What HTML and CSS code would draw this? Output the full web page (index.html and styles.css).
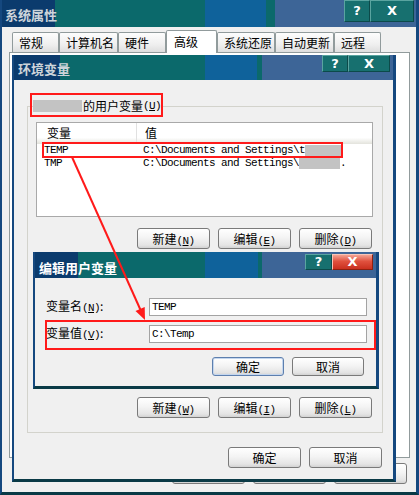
FILE: index.html
```html
<!DOCTYPE html>
<html lang="zh-CN">
<head>
<meta charset="utf-8">
<title>系统属性</title>
<link rel="stylesheet" href="styles.css">
</head>
<body>
<div class="win outer">
  <div class="titlebar outer-tb">
    <span class="title inactive">系统属性</span>
    <div class="caps"><span class="cap help">?</span><span class="cap close">X</span></div>
  </div>
  <div class="outer-body">
    <div class="tabs">
      <span class="tab t1">常规</span>
      <span class="tab t2">计算机名</span>
      <span class="tab t3">硬件</span>
      <span class="tab t4 sel">高级</span>
      <span class="tab t5">系统还原</span>
      <span class="tab t6">自动更新</span>
      <span class="tab t7">远程</span>
    </div>
    <div class="panel"></div>
    <div class="btnrow outer-btns">
      <span class="btn">确定</span><span class="btn">取消</span><span class="btn">应用<span class="acc">(<u>A</u>)</span></span>
    </div>
  </div>
</div>

<div class="win env">
  <div class="titlebar env-tb">
    <span class="title inactive">环境变量</span>
    <div class="caps"><span class="cap help">?</span><span class="cap close">X</span></div>
  </div>
  <div class="env-body">
    <fieldset class="group">
      <legend><span class="blot name"></span>的用户变量<span class="acc">(<u>U</u>)</span></legend>
      <div class="list">
        <div class="lh"><span class="c1">变量</span><span class="c2">值</span></div>
        <div class="lr"><span class="c1 mono">TEMP</span><span class="c2 mono">C:\Documents and Settings\t<span class="blot b1"></span></span></div>
        <div class="lr"><span class="c1 mono">TMP</span><span class="c2 mono">C:\Documents and Settings\<span class="blot b2"></span>.</span></div>
      </div>
      <div class="btnrow grp-btns">
        <span class="btn">新建<span class="acc">(<u>N</u>)</span></span>
        <span class="btn">编辑<span class="acc">(<u>E</u>)</span></span>
        <span class="btn">删除<span class="acc">(<u>D</u>)</span></span>
      </div>
      <div class="sys">
        <div class="list sys-list"></div>
      </div>
      <div class="btnrow grp-btns2">
        <span class="btn">新建<span class="acc">(<u>W</u>)</span></span>
        <span class="btn">编辑<span class="acc">(<u>I</u>)</span></span>
        <span class="btn">删除<span class="acc">(<u>L</u>)</span></span>
      </div>
    </fieldset>
    <div class="btnrow dlg-btns">
      <span class="btn">确定</span><span class="btn">取消</span>
    </div>
  </div>
</div>

<div class="win edit">
  <div class="titlebar edit-tb">
    <span class="title">编辑用户变量</span>
    <div class="caps"><span class="cap help">?</span><span class="cap close red">X</span></div>
  </div>
  <div class="edit-body">
    <div class="field"><label>变量名<span class="acc">(<u>N</u>)</span>:</label><span class="input mono">TEMP</span></div>
    <div class="field"><label>变量值<span class="acc">(<u>V</u>)</span>:</label><span class="input mono">C:\Temp</span></div>
    <div class="btnrow edit-btns">
      <span class="btn small default">确定</span><span class="btn small">取消</span>
    </div>
  </div>
</div>

<svg class="marks" width="419" height="495" viewBox="0 0 419 495">
  <g fill="none" stroke="#ff1a1a" stroke-width="2">
    <rect x="31" y="94" width="131" height="22"/>
    <rect x="43" y="143" width="299" height="14"/>
    <rect x="46" y="321" width="329" height="28"/>
    <line x1="72" y1="157" x2="141" y2="311"/>
  </g>
  <polygon points="145,320 135.5,311 144.7,307" fill="#ff1a1a"/>
</svg>
</body>
</html>
```

FILE: styles.css
```css
html, body {
  margin: 0;
}
body {
  width: 419px;
  height: 495px;
  position: relative;
  overflow: hidden;
  background: #f0f0f0;
  color: #000;
  font-family: "Noto Sans CJK SC", "Noto Sans", sans-serif;
  font-size: 12px;
  line-height: 14px;
}

.win {
  box-sizing: border-box;
  display: flex;
  flex-direction: column;
  background: #f0f0f0;
  border-style: solid;
  border-color: #15487f;
  border-width: 0 3px 3px 2px;
  border-bottom-color: #0a3a46;
}
.win.outer {
  width: 419px;
  height: 495px;
}
.win.env {
  position: absolute;
  left: 12px;
  top: 55px;
  width: 384px;
  height: 427px;
}
.win.edit {
  position: absolute;
  left: 33px;
  top: 252px;
  width: 346px;
  height: 137px;
}

/* title bars */
.titlebar {
  display: flex;
  align-items: flex-start;
  flex: none;
}
.outer-tb {
  height: 27px;
  background: linear-gradient(to right,
    #0b3b6d 0, #0b3b6d 53px,
    #0b696b 53px, #0b696b 203px,
    #0f629b 203px, #0f629b 264px,
    #0b696b 264px, #0b696b 273px,
    #3d6597 273px);
}
.env-tb {
  height: 25px;
  background: linear-gradient(to right,
    #0b3b6d 0, #0b3b6d 46px,
    #0b696b 46px, #0b696b 191px,
    #0f629b 191px, #0f629b 243px,
    #0b696b 243px, #0b696b 248px,
    #3d6597 248px);
}
.edit-tb {
  height: 26px;
  background: linear-gradient(to right,
    #0b3b6d 0, #0b3b6d 43px,
    #0b696b 43px, #0b696b 170px,
    #0f629b 170px, #0f629b 223px,
    #0b696b 223px, #0b696b 227px,
    #3d6597 227px);
}
.title {
  font-size: 13px;
  font-weight: bold;
  line-height: 16px;
  color: #fff;
  padding-left: 4px;
  padding-top: 8px;
  white-space: nowrap;
}
.title.inactive {
  color: #cdd4da;
}
.outer-tb .title { padding-left: 3px; padding-top: 7px; }
.env-tb .title { padding-top: 6px; }

.caps {
  margin-left: auto;
  display: flex;
}
.cap {
  box-sizing: border-box;
  display: flex;
  align-items: center;
  justify-content: center;
  color: #fff;
  font-family: "DejaVu Sans", sans-serif;
  font-weight: bold;
  font-size: 13px;
  background: #17706f;
  border: 1px solid;
  border-color: #5aa4a0 #0c4a4a #0c4a4a #5aa4a0;
}
.outer-tb .caps { margin-right: 2px; }
.outer-tb .cap { height: 22px; }
.outer-tb .help { width: 26px; }
.outer-tb .close { width: 44px; }
.env-tb .caps { margin-right: 3px; }
.env-tb .cap { height: 17px; }
.env-tb .help { width: 26px; }
.env-tb .close { width: 42px; }
.edit-tb .caps { margin: 2px 3px 0 auto; }
.edit-tb .cap { height: 16px; }
.edit-tb .help { width: 27px; }
.edit-tb .close { width: 41px; }
.cap.red {
  background: linear-gradient(#f3a292, #e0513e 45%, #c9301f);
  border-color: #f8c4b6 #8e2010 #8e2010 #f8c4b6;
}

/* outer window body */
.outer-body {
  flex: 1;
  display: flex;
  flex-direction: column;
  padding: 0 6px 8px 7px;
}
.tabs {
  display: flex;
  align-items: flex-end;
  height: 22px;
  margin: 3px 0 0 3px;
}
.tab {
  box-sizing: border-box;
  height: 20px;
  line-height: 19px;
  padding-left: 6px;
  border: 1px solid #919b9c;
  border-bottom: none;
  border-radius: 2px 2px 0 0;
  background: linear-gradient(#fdfdfd, #efefef 60%, #dedede);
}
.tab.sel {
  height: 23px;
  margin-bottom: -1px;
  padding-left: 7px;
  line-height: 21px;
  background: #fff;
  position: relative;
  z-index: 1;
}
.t1 { width: 47px; }
.t2 { width: 59px; }
.t3 { width: 48px; }
.t4 { width: 51px; }
.t5 { width: 58px; }
.t6 { width: 59px; }
.t7 { width: 47px; }
.panel {
  box-sizing: border-box;
  height: 406px;
  border: 1px solid #919b9c;
  background: #fff;
}

/* buttons */
.btnrow {
  display: flex;
  justify-content: flex-end;
  gap: 8px;
}
.btn {
  box-sizing: border-box;
  width: 73px;
  height: 21px;
  line-height: 19px;
  text-align: center;
  border: 1px solid #7a7a7a;
  border-radius: 3px;
  background: linear-gradient(#ffffff, #f4f4f4 45%, #e4e4e4 85%, #d2d2d2);
  white-space: nowrap;
}
.btn.small {
  width: 72px;
  height: 19px;
  line-height: 17px;
}
.btn.default {
  border-color: #5d7fae;
  box-shadow: inset 0 0 0 1px #c4d6ee;
}
.outer-btns { margin: 5px 3px 0 0; }

.acc {
  font-family: "Liberation Mono", monospace;
  font-size: 11px;
  letter-spacing: -0.6px;
}
.mono {
  font-family: "Liberation Mono", monospace;
  font-size: 11px;
  letter-spacing: -0.6px;
}

/* environment window */
.env-body {
  flex: 1;
  display: flex;
  flex-direction: column;
  padding: 0 10px 0 13px;
}
.group {
  margin: 19px 0 0;
  padding: 0 9px 14px 8px;
  border: 1px solid #d3d3cc;
  min-width: 0;
}
.group legend {
  margin-left: -3px;
  padding: 0 2px 0 0;
  line-height: 14px;
  display: flex;
  align-items: center;
}
.blot {
  display: inline-block;
  background: #c3c3c3;
  height: 11px;
  vertical-align: middle;
}
.blot.name { width: 49px; height: 12px; margin-right: 1px; }
.blot.b1 { width: 36px; }
.blot.b2 { width: 41px; }

.list {
  box-sizing: border-box;
  margin-top: 9px;
  height: 95px;
  border: 1px solid #a9a9a9;
  background: #fff;
}
.lh {
  display: flex;
  height: 21px;
  line-height: 20px;
  background: linear-gradient(#fff 70%, #f1f1ed 85%, #e3e3dc);
}
.lh .c1 {
  box-sizing: border-box;
  width: 100px;
  padding-left: 10px;
  border-right: 1px solid #e1e1e1;
}
.lh .c2 {
  padding-left: 8px;
}
.lr {
  display: flex;
  height: 13px;
  line-height: 13px;
  white-space: nowrap;
}
.lr .c1 {
  box-sizing: border-box;
  width: 101px;
  padding-left: 7px;
}
.lr .c2 {
  padding-left: 5px;
}
.grp-btns { margin: 11px 1px 0 0; }
.sys {
  height: 148px;
  display: flex;
  flex-direction: column;
}
.list.sys-list { margin-top: 34px; height: 105px; }
.grp-btns2 { margin-right: 1px; }
.dlg-btns { margin: 14px 1px 0 0; }

/* edit dialog */
.edit-body {
  display: flex;
  flex-direction: column;
  gap: 9px;
  padding: 20px 9px 0 11px;
}
.field {
  display: flex;
  align-items: center;
  height: 18px;
}
.field label {
  width: 103px;
  white-space: nowrap;
}
.input {
  box-sizing: border-box;
  width: 218px;
  height: 18px;
  line-height: 16px;
  padding-left: 2px;
  border: 1px solid #a3a3a3;
  background: #fff;
}
.edit-btns { margin: 5px 3px 0 0; }

.marks {
  position: absolute;
  left: 0;
  top: 0;
  pointer-events: none;
}
```
